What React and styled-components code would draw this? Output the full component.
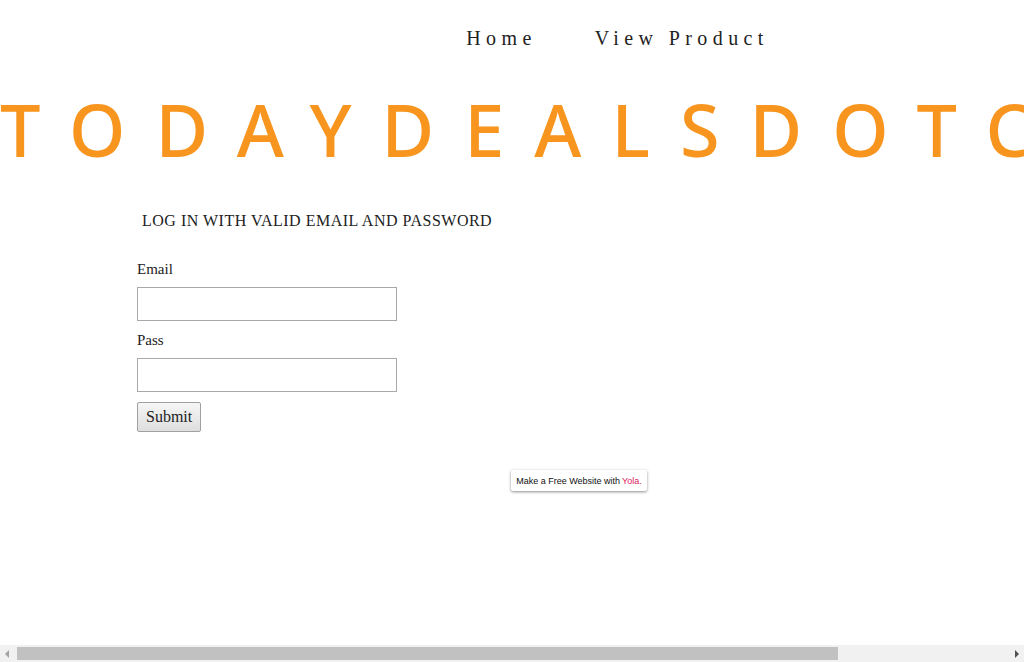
import React from 'react';
import styled, { createGlobalStyle } from "styled-components"

const GlobalStyle = createGlobalStyle`
  html, body {
    margin: 0;
    padding: 0;
    background: #fff;
  }
  body {
    font-family: "Liberation Serif", serif;
    color: #222;
  }
`;

const Page = styled.div`
  width: 1235px;
  min-height: 645px;
  position: relative;
`;

const Nav = styled.nav`
  display: flex;
  justify-content: center;
  gap: 58px;
  padding-top: 27px;
  height: 36px;
`;

const NavLink = styled.a`
  font-family: "Liberation Serif", serif;
  font-size: 20px;
  letter-spacing: 0.27em;
  color: #222;
  text-decoration: none;
`;

const Title = styled.h1`
  margin: 28px 0 0;
  font-family: "Noto Sans", sans-serif;
  font-weight: 500;
  font-size: 72px;
  line-height: 76px;
  letter-spacing: 30px;
  color: #f7951f;
  white-space: nowrap;
`;

const Content = styled.section`
  padding: 45px 0 0 137px;
`;

const Heading = styled.h2`
  margin: 0 0 30px 5px;
  font-family: "Liberation Serif", serif;
  font-weight: normal;
  font-size: 16px;
  letter-spacing: 0.5px;
  color: #222;
`;

const Form = styled.form`
  display: flex;
  flex-direction: column;
  align-items: flex-start;
`;

const Label = styled.label`
  font-size: 15px;
  line-height: 18px;
  margin-bottom: 9px;
`;

const Input = styled.input`
  box-sizing: border-box;
  width: 260px;
  height: 34px;
  border: 1px solid #a9a9a9;
  margin-bottom: 10px;
  padding: 0 6px;
  font-family: inherit;
`;

const Button = styled.button`
  box-sizing: border-box;
  height: 30px;
  padding: 0 8px;
  font-family: "Liberation Serif", serif;
  font-size: 16px;
  color: #222;
  border: 1px solid #a0a0a0;
  border-radius: 2px;
  background: linear-gradient(#f6f6f6, #dedede);
`;

const Badge = styled.a`
  position: absolute;
  left: 511px;
  top: 470px;
  width: 136px;
  height: 21px;
  box-sizing: border-box;
  display: flex;
  align-items: center;
  justify-content: center;
  background: #fff;
  border-radius: 2px;
  box-shadow: 0 1px 3px rgba(0, 0, 0, 0.45);
  font-family: "Liberation Sans", Arial, sans-serif;
  font-size: 9px;
  color: #111;
  text-decoration: none;

  span {
    color: #e0195c;
    margin-left: 2px;
  }
`;

const ScrollBar = styled.div`
  position: fixed;
  left: 0;
  right: 0;
  bottom: 0;
  height: 17px;
  background: #f1f1f1;
  display: flex;
  align-items: center;
  padding: 0 5px;
  box-sizing: border-box;
  gap: 4px;
`;

const Arrow = styled.div`
  width: 0;
  height: 0;
  border-top: 4px solid transparent;
  border-bottom: 4px solid transparent;
  ${({ $dir }) => $dir === "left"
    ? "border-right: 4px solid #a3a3a3;"
    : "border-left: 4px solid #505050; margin-left: auto;"}
`;

const Thumb = styled.div`
  width: 821px;
  height: 13px;
  background: #c1c1c1;
  margin-left: 4px;
`;

function App() {
  return (
    <Page>
      <GlobalStyle />
      <Nav>
        <NavLink href="#">Home</NavLink>
        <NavLink href="#">View Product</NavLink>
      </Nav>
      <Title>TODAYDEALSDOTCOM</Title>
      <Content>
        <Heading>LOG IN WITH VALID EMAIL AND PASSWORD</Heading>
        <Form onSubmit={(e) => e.preventDefault()}>
          <Label>Email</Label>
          <Input type="text" />
          <Label>Pass</Label>
          <Input type="password" />
          <Button type="submit">Submit</Button>
        </Form>
      </Content>
      <Badge href="#">Make a Free Website with <span>Yola.</span></Badge>
      <ScrollBar>
        <Arrow $dir="left" />
        <Thumb />
        <Arrow $dir="right" />
      </ScrollBar>
    </Page>
  );
}

export default App;
